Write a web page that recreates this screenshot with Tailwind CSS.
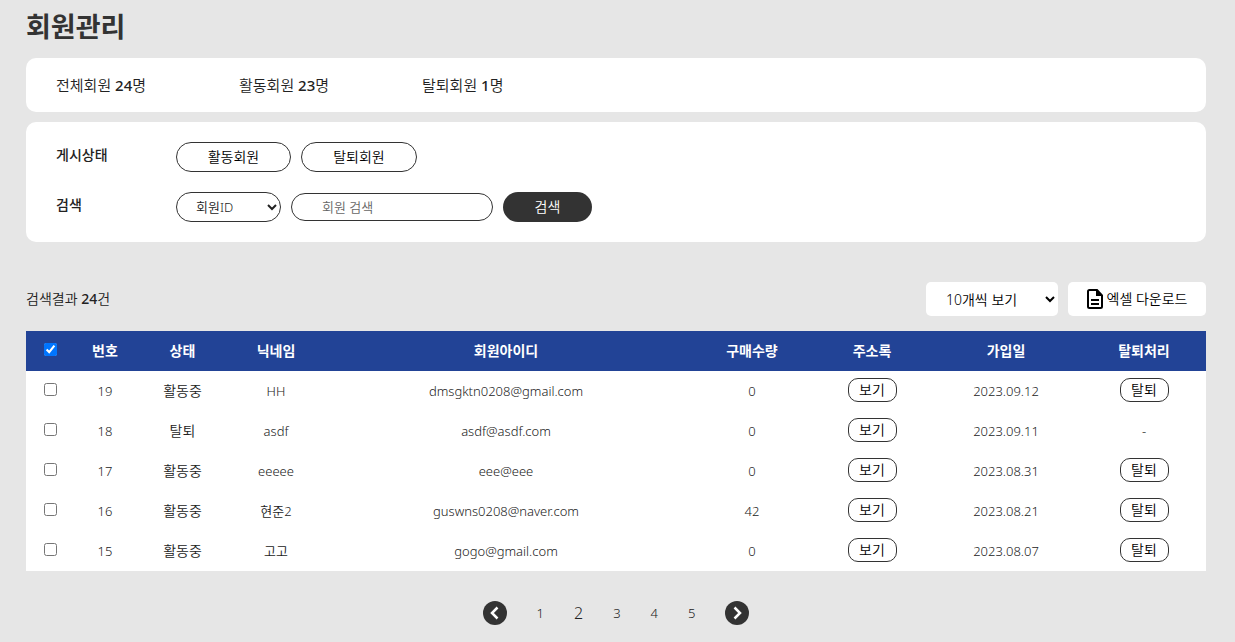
<!DOCTYPE html>
<html lang="ko">
<head>
<meta charset="utf-8">
<title>회원관리</title>
<script src="https://cdn.jsdelivr.net/npm/@tailwindcss/browser@4"></script>
</head>
<body class="bg-[#e6e6e6] text-[#222] font-['Noto_Sans','Noto_Sans_CJK_KR',sans-serif] font-[350] text-[13px] leading-5">
<main class="pl-[26px] pr-[29px] pt-[9px] pb-4">
  <h1 class="text-[27px] leading-9 font-bold text-[#333] mb-[13px]">회원관리</h1>

  <section class="bg-white rounded-[10px] h-[54px] px-[30px] flex items-center text-[15px]">
    <p class="w-[183px]">전체회원 <strong class="font-medium">24</strong>명</p>
    <p class="w-[183px]">활동회원 <strong class="font-medium">23</strong>명</p>
    <p class="w-[183px]">탈퇴회원 <strong class="font-medium">1</strong>명</p>
  </section>

  <form class="bg-white rounded-[10px] mt-[10px] px-[30px] py-5 flex flex-col gap-5 text-sm">
    <div class="flex" role="group" aria-labelledby="state">
      <span id="state" class="w-[120px] leading-[26px] font-medium">게시상태</span>
      <div class="flex gap-[10px] text-black">
        <button type="button" class="h-[30px] w-[115px] rounded-full border border-[#333]">활동회원</button>
        <button type="button" class="h-[30px] w-[116px] rounded-full border border-[#333]">탈퇴회원</button>
      </div>
    </div>
    <div class="flex">
      <label for="keyword" class="w-[120px] leading-[26px] font-medium">검색</label>
      <div class="flex items-center gap-[10px]">
        <select aria-label="검색 조건" class="h-[30px] w-[105px] rounded-full border border-[#333] bg-white pl-[15px] text-[13px]">
          <option>회원ID</option>
        </select>
        <input id="keyword" type="text" placeholder="회원 검색" class="h-7 w-[202px] rounded-full border border-[#333] px-[30px] text-[13px] placeholder:text-[#666]">
        <button type="submit" class="h-[30px] w-[89px] rounded-full bg-[#333] text-white">검색</button>
      </div>
    </div>
  </form>

  <div class="mt-10 mb-[15px] flex items-center justify-between text-sm">
    <p>검색결과 <strong class="font-medium">24</strong>건</p>
    <div class="flex gap-[10px] text-black">
      <select aria-label="페이지당 개수" class="h-[34px] w-[132px] rounded-[5px] bg-white pl-4">
        <option>10개씩 보기</option>
      </select>
      <button type="button" class="h-[34px] w-[138px] rounded-[5px] bg-white flex items-center justify-center gap-1">
        <svg class="w-4 h-5" viewBox="0 0 16 20" fill="none" stroke="#000" stroke-width="2" aria-hidden="true"><path d="M10 1H2.500Q1 1 1 2.500V17.500Q1 19 2.500 19H13.500Q15 19 15 17.500V6.500Z"/><path d="M9 1V7H15V6L10 1Z" fill="#000" stroke="none"/><path d="M4 11H12M4 15H12"/></svg>
        엑셀 다운로드
      </button>
    </div>
  </div>

  <table class="w-full table-fixed bg-white text-center">
    <colgroup>
      <col class="w-[49px]"><col class="w-[60px]"><col class="w-[95px]"><col class="w-[92px]"><col><col class="w-[124px]"><col class="w-[116px]"><col class="w-[152px]"><col class="w-[124px]">
    </colgroup>
    <thead class="bg-[#224396] text-white text-sm">
      <tr class="h-10 *:font-bold">
        <th><input type="checkbox" checked aria-label="전체 선택" class="block mx-auto mb-1 w-[13px] h-[13px]"></th>
        <th>번호</th><th>상태</th><th>닉네임</th><th>회원아이디</th><th>구매수량</th><th>주소록</th><th>가입일</th><th>탈퇴처리</th>
      </tr>
    </thead>
    <tbody id="members"></tbody>
  </table>

  <nav aria-label="페이지" class="mt-[30px] flex items-center justify-center gap-[30px]">
    <a href="#" aria-label="이전"><svg class="w-6 h-6" viewBox="0 0 24 24" fill="none"><circle cx="12" cy="12" r="12" fill="#333"/><path d="M14.500 6.500L9 12L14.500 17.500" stroke="#fff" stroke-width="2.500"/></svg></a>
    <a href="#">1</a>
    <a href="#" aria-current="page" class="text-base leading-5">2</a>
    <a href="#">3</a>
    <a href="#">4</a>
    <a href="#">5</a>
    <a href="#" aria-label="다음"><svg class="w-6 h-6" viewBox="0 0 24 24" fill="none"><circle cx="12" cy="12" r="12" fill="#333"/><path d="M9.500 6.500L15 12L9.500 17.500" stroke="#fff" stroke-width="2.500"/></svg></a>
  </nav>
</main>
<script>
const members = [
  [19, '활동중', 'HH', 'dmsgktn0208@gmail.com', 0, '2023.09.12'],
  [18, '탈퇴', 'asdf', 'asdf@asdf.com', 0, '2023.09.11'],
  [17, '활동중', 'eeeee', 'eee@eee', 0, '2023.08.31'],
  [16, '활동중', '현준2', 'guswns0208@naver.com', 42, '2023.08.21'],
  [15, '활동중', '고고', 'gogo@gmail.com', 0, '2023.08.07'],
];
const button = text => `<button type="button" class="block mx-auto mb-[2px] w-[49px] h-6 rounded-[10px] border border-[#333] text-sm text-black leading-5">${text}</button>`;
document.getElementById('members').innerHTML = members.map(([no, state, nick, id, count, date]) => `
  <tr class="h-10">
    <td><input type="checkbox" aria-label="${no}번 선택" class="block mx-auto mb-1 w-[13px] h-[13px]"></td>
    <td>${no}</td><td class="text-sm">${state}</td><td>${nick}</td><td>${id}</td><td>${count}</td>
    <td>${button('보기')}</td><td>${date}</td>
    <td>${state === '탈퇴' ? '-' : button('탈퇴')}</td>
  </tr>`).join('');
</script>
</body>
</html>
